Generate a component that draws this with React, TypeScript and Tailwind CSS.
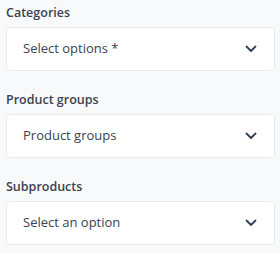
const fields = [
  { label: 'Categories', placeholder: 'Select options *' },
  { label: 'Product groups', placeholder: 'Product groups' },
  { label: 'Subproducts', placeholder: 'Select an option' },
];

function Chevron() {
  return (
    <svg width="12" height="8" viewBox="0 0 12 8" fill="none" className="text-[#344054]">
      <path d="M1.5 1.5 6 6l4.5-4.5" stroke="currentColor" strokeWidth="1.8" strokeLinecap="round" strokeLinejoin="round" />
    </svg>
  );
}

export default function App() {
  return (
    <div className="w-[280px] h-[253px] bg-[#f8f9fb] pl-[6px] pr-[5px] pt-[1px] font-['Open_Sans',sans-serif]">
      {fields.map((f) => (
        <div key={f.label} className="mb-[17px]">
          <div className="h-[26px] text-[12.5px] font-semibold text-[#3b4150] leading-[24px]">{f.label}</div>
          <button className="w-full h-[44px] flex items-center justify-between bg-white border border-[#e8eaee] rounded-[4px] pl-[16px] pr-[17px]">
            <span className="text-[13px] text-[#3b4252]">{f.placeholder}</span>
            <Chevron />
          </button>
        </div>
      ))}
    </div>
  );
}
